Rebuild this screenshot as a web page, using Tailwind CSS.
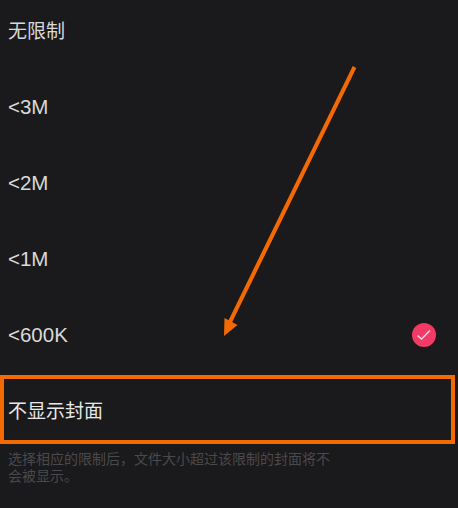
<!DOCTYPE html>
<html lang="zh">
<head>
<meta charset="utf-8">
<script src="https://cdn.jsdelivr.net/npm/@tailwindcss/browser@4"></script>
</head>
<body class="m-0 bg-[#1a191b]">
<main class="relative w-[458px] h-[508px] overflow-hidden bg-[#1a191b] font-['Liberation_Sans','Noto_Sans_CJK_SC',sans-serif] text-[#d9d9d9] text-[19px]">
  <div class="-mt-[6px] flex flex-col">
    <div class="h-[76px] flex items-center pl-2">无限制</div>
    <div class="h-[76px] flex items-center pl-2 pb-[2px] text-[20.5px]">&lt;3M</div>
    <div class="h-[76px] flex items-center pl-2 pb-[2px] text-[20.5px]">&lt;2M</div>
    <div class="h-[76px] flex items-center pl-2 pb-[2px] text-[20.5px]">&lt;1M</div>
    <div class="h-[76px] flex items-center justify-between pl-2 pr-[22px] pb-[2px] text-[20.5px]">
      <span>&lt;600K</span>
      <span class="w-6 h-6 rounded-full bg-[#f23a66] flex items-center justify-center">
        <svg width="16" height="16" viewBox="0 0 16 16" fill="none"><path d="M1.5 8.5 L5.5 12 L14 3.5" stroke="#f7d5dd" stroke-width="1.6"/></svg>
      </span>
    </div>
    <div class="h-[76px] flex items-center pl-2 text-[#e8e8e8]">不显示封面</div>
  </div>
  <p class="m-0 mt-px pl-2 w-[340px] text-[14px] leading-[17px] text-[#4a494b]">选择相应的限制后，文件大小超过该限制的封面将不会被显示。</p>
  <div class="absolute left-0 top-[375px] w-[455px] h-[69px] border-4 border-[#f56a00]"></div>
  <svg class="absolute left-0 top-0" width="458" height="508" viewBox="0 0 458 508" fill="none">
    <line x1="354.5" y1="67" x2="228" y2="326" stroke="#f56a00" stroke-width="4"/>
    <path d="M224 336 L224.500 318 L237.500 325 Z" fill="#f56a00"/>
  </svg>
</main>
</body>
</html>
